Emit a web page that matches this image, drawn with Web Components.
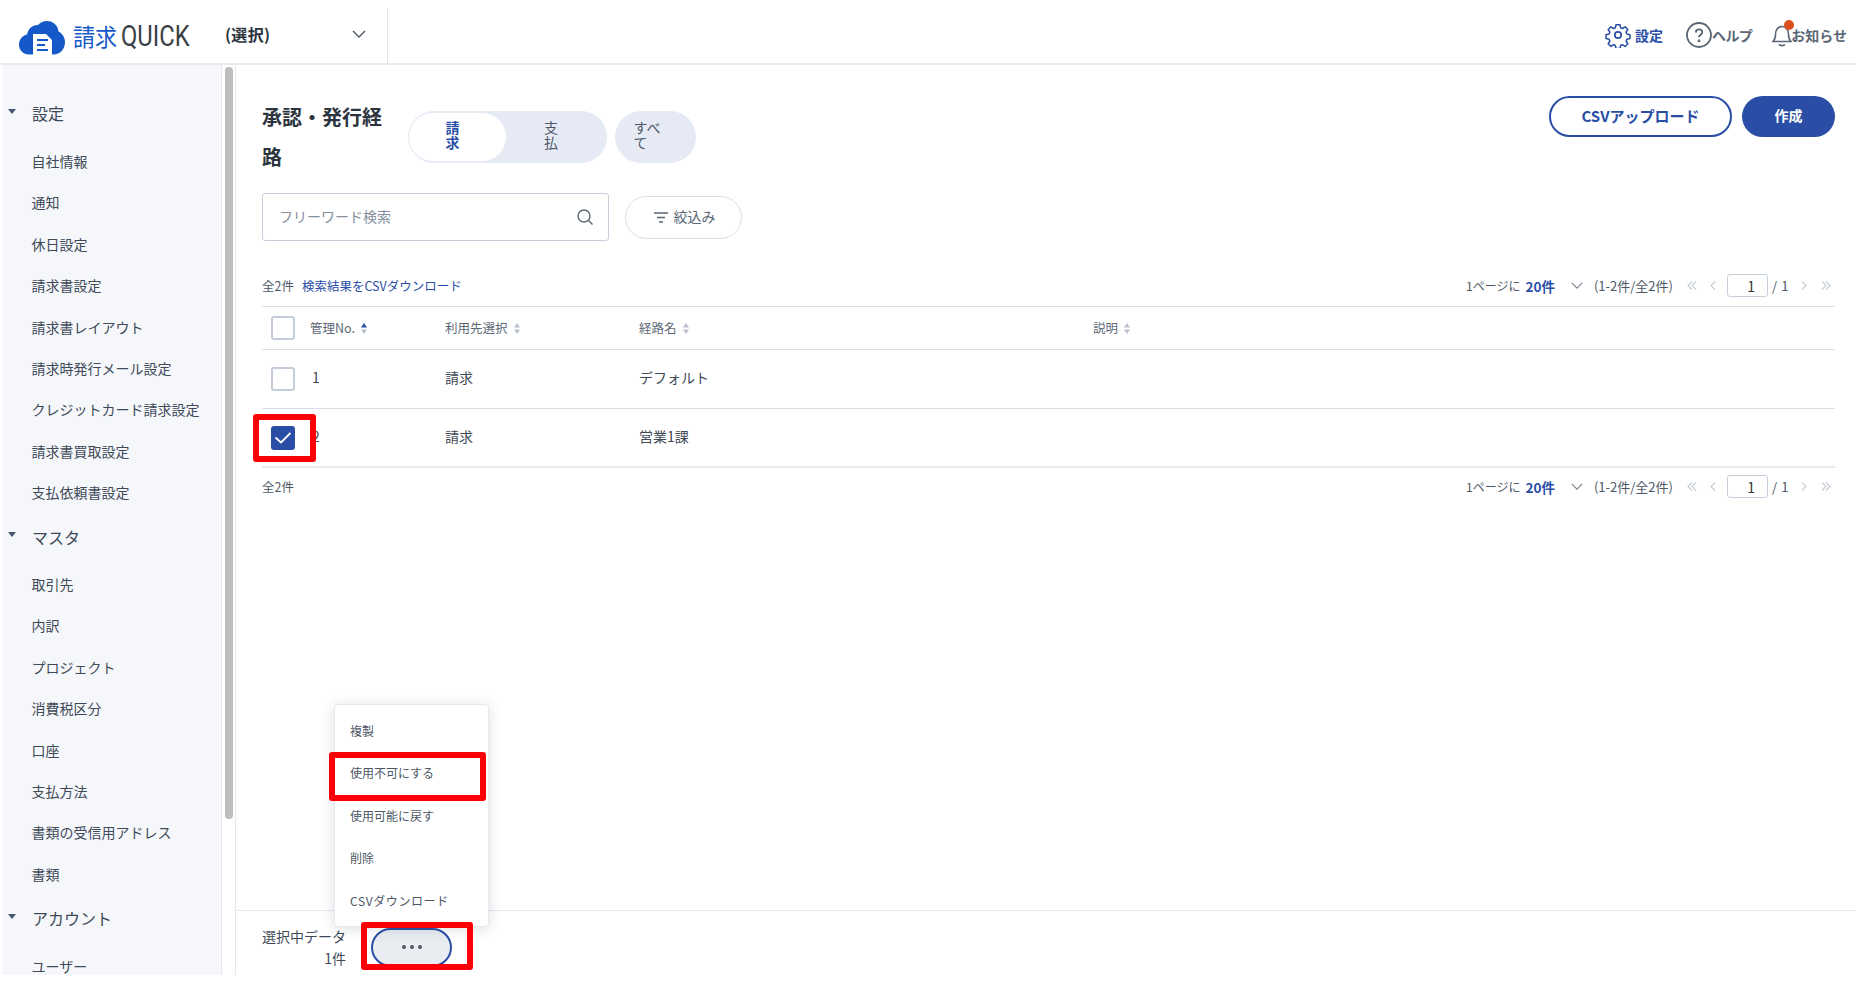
<!DOCTYPE html>
<html lang="ja">
<head>
<meta charset="utf-8">
<title>承認・発行経路</title>
<style>
  html, body { margin: 0; padding: 0; background: #fff; overflow: hidden; }
  body { font-family: "Noto Sans CJK JP", "Noto Sans", sans-serif; color: #3f4a58; }
</style>
</head>
<body>
<app-shell>
  <app-header slot="header"></app-header>
  <side-nav slot="nav">
    <nav-section>設定</nav-section>
    <nav-item>自社情報</nav-item>
    <nav-item>通知</nav-item>
    <nav-item>休日設定</nav-item>
    <nav-item>請求書設定</nav-item>
    <nav-item>請求書レイアウト</nav-item>
    <nav-item>請求時発行メール設定</nav-item>
    <nav-item>クレジットカード請求設定</nav-item>
    <nav-item>請求書買取設定</nav-item>
    <nav-item>支払依頼書設定</nav-item>
    <nav-section>マスタ</nav-section>
    <nav-item>取引先</nav-item>
    <nav-item>内訳</nav-item>
    <nav-item>プロジェクト</nav-item>
    <nav-item>消費税区分</nav-item>
    <nav-item>口座</nav-item>
    <nav-item>支払方法</nav-item>
    <nav-item>書類の受信用アドレス</nav-item>
    <nav-item>書類</nav-item>
    <nav-section>アカウント</nav-section>
    <nav-item>ユーザー</nav-item>
  </side-nav>
  <route-page slot="main"></route-page>
  <red-mark style="left:253px;top:414px;width:63px;height:48px"></red-mark>
  <red-mark style="left:329px;top:752px;width:157px;height:49px"></red-mark>
  <red-mark style="left:361px;top:922px;width:112px;height:48px"></red-mark>
</app-shell>

<script>
const ICONS = {
  chevron: '<svg width="14" height="8" viewBox="0 0 14 8" fill="none" stroke="currentColor" stroke-width="1.4"><path d="M1 1l6 6 6-6"/></svg>',
  sort: (active) => `<svg width="6" height="13" viewBox="0 0 6 13"><path d="M3 1L6 5.500H0z" fill="${active ? '#2a4ea6' : '#b9c1cd'}"/><path d="M3 12L0 7.500h6z" fill="#b9c1cd"/></svg>`,
  first: '<svg width="10" height="9" viewBox="0 0 10 9" fill="none" stroke="#c6ccd6" stroke-width="1.1"><path d="M5 .5L1 4.500l4 4M9 .5L5 4.500l4 4"/></svg>',
  prev: '<svg width="6" height="9" viewBox="0 0 6 9" fill="none" stroke="#c6ccd6" stroke-width="1.1"><path d="M5 .5L1 4.500l4 4"/></svg>',
  next: '<svg width="6" height="9" viewBox="0 0 6 9" fill="none" stroke="#c6ccd6" stroke-width="1.1"><path d="M1 .5l4 4-4 4"/></svg>',
  last: '<svg width="10" height="9" viewBox="0 0 10 9" fill="none" stroke="#c6ccd6" stroke-width="1.1"><path d="M1 .5l4 4-4 4M5 .5l4 4-4 4"/></svg>'
};

class AppShell extends HTMLElement {
  constructor() {
    super();
    this.attachShadow({ mode: 'open' });
    this.shadowRoot.innerHTML = `
      <style>
        :host { display: grid; position: relative; width: 1855px; height: 975px; grid-template-rows: 65px 910px; grid-template-columns: 236px 1fr; overflow: hidden; }
        .top { grid-column: 1 / 3; }
      </style>
      <div class="top"><slot name="header"></slot></div>
      <slot name="nav"></slot>
      <slot name="main"></slot>
      <slot></slot>
    `;
  }
}

class AppHeader extends HTMLElement {
  constructor() {
    super();
    this.attachShadow({ mode: 'open' });
    this.shadowRoot.innerHTML = `
      <style>
        :host { display: flex; height: 63px; border-bottom: 2px solid #e8eaf0; align-items: stretch; justify-content: space-between; background: #fff; }
        .left { display: flex; align-items: center; height: 54px; margin-top: 9px; border-right: 1px solid #e3e5ea; width: 388px; box-sizing: border-box; padding-left: 19px; }
        .logo { display: block; margin-top: 3px; }
        .brand { display: flex; align-items: center; margin-left: 8px; width: 142px; height: 34px; margin-top: -1px; white-space: nowrap; }
        .brand span { display: inline-block; font-size: 24px; color: #1558c8; width: 48px; transform: scaleX(.92); transform-origin: left center; }
        .brand b { display: inline-block; font: 400 29px Roboto, sans-serif; color: #3b3f46; transform: scaleX(.82); transform-origin: left center; }
        .pick { font-size: 16px; font-weight: 700; color: #2c3440; margin-left: 10px; width: 127px; margin-top: -5px; letter-spacing: .3px; }
        .chev { color: #4d5866; display: flex; margin-top: -4px; }
        .right { display: flex; align-items: center; padding-top: 6px; font-size: 14px; font-weight: 700; color: #5a6675; margin-right: 8px; }
        .act { display: flex; align-items: center; position: relative; white-space: nowrap; }
        .gear { color: #2a4ea6; margin-right: 23px; }
        .gear svg { margin-right: 4px; }
        .help { margin-right: 20px; letter-spacing: -.6px; }
        .bell svg { margin-right: -1px; }
        .bell i { position: absolute; left: 12px; top: -2px; width: 10px; height: 10px; border-radius: 50%; background: #d9501e; }
      </style>
      <div class="left">
        <svg class="logo" width="46" height="34" viewBox="0 0 46 34">
          <path fill="#1558c8" d="M10 33.500C4 33.500 0 29 0 23.500c0-5 3.500-9 8-10C9.500 7 14 3.500 19 4c2.500-2.500 5.500-4 9-4 6 0 11 4.500 11.500 10.500 3.800 2 6.500 6 6.500 10.500 0 7-5 12.500-11.500 12.500z"/>
          <path fill="#fff" d="M14 13h13l6 6v15H14z"/>
          <path stroke="#1558c8" stroke-width="2" d="M18 19h11M18 24h8M18 29h11"/>
        </svg>
        <div class="brand"><span>請求</span><b>QUICK</b></div>
        <div class="pick">(選択)</div>
        <div class="chev">${ICONS.chevron}</div>
      </div>
      <div class="right">
        <div class="act gear">
          <svg width="26" height="26" viewBox="0 0 26 26" fill="none" stroke="currentColor" stroke-width="1.700" stroke-linejoin="round"><path d="M10.800 1.500h4.400l.7 3.400 2 .9 3-1.900 3 3-1.900 3 .9 2 3.400.7v4.400l-3.400.7-.9 2 1.900 3-3 3-3-1.900-2 .9-.7 3.400h-4.400l-.7-3.400-2-.9-3 1.900-3-3 1.900-3-.9-2-3.400-.7v-4.400l3.400-.7.9-2-1.900-3 3-3 3 1.900 2-.9z" transform="translate(1.300 1.300) scale(.9)"/><circle cx="13" cy="13" r="3.200"/></svg>
          設定
        </div>
        <div class="act help">
          <svg width="26" height="26" viewBox="0 0 26 26" fill="none" stroke="currentColor" stroke-width="1.800"><circle cx="13" cy="13" r="12"/><path d="M9.800 10.500c0-2 1.500-3.200 3.300-3.200s3.200 1.200 3.200 3c0 2.500-3.300 2.500-3.300 5"/><circle cx="13" cy="18.800" r=".6"/></svg>
          ヘルプ
        </div>
        <div class="act bell">
          <svg width="20" height="26" viewBox="0 0 20 26" fill="none" stroke="currentColor" stroke-width="1.600"><path d="M1 19.500c2-2 2.500-3.500 2.500-7 0-4.500 2.500-8 6.500-8s6.500 3.500 6.500 8c0 3.500.5 5 2.500 7z"/><path d="M7 22.500c1 1.500 5 1.500 6 0"/></svg>
          <i></i>
          お知らせ
        </div>
      </div>
    `;
  }
}

class SideNav extends HTMLElement {
  constructor() {
    super();
    this.attachShadow({ mode: 'open' });
    this.shadowRoot.innerHTML = `
      <style>
        :host { display: flex; height: 910px; margin-left: 2px; overflow: hidden; }
        .list { width: 220px; flex: none; background: #f5f7fb; padding-top: 25.700px; box-sizing: border-box; border-right: 1px solid #e6e8ee; }
        .track { width: 8px; flex: none; background: #fff; border-right: 1px solid #e6e8ee; padding: 2px 2px 0 3px; }
        .thumb { height: 752px; background: #bdbdbd; border-radius: 4px; }
      </style>
      <div class="list"><slot></slot></div>
      <div class="track"><div class="thumb"></div></div>
    `;
  }
}

class NavSection extends HTMLElement {
  constructor() {
    super();
    this.attachShadow({ mode: 'open' });
    this.shadowRoot.innerHTML = `
      <style>
        :host { display: flex; align-items: center; height: 46.600px; margin-bottom: 4px; font-size: 16px; color: #3f4a58; }
        i { width: 0; height: 0; margin: -5px 0 0 6px; border: 4px solid transparent; border-top: 5px solid #46566e; border-bottom: 0; }
        span { margin-left: 16px; padding-bottom: 1px; }
      </style>
      <i></i><span><slot></slot></span>
    `;
  }
}

class NavItem extends HTMLElement {
  constructor() {
    super();
    this.attachShadow({ mode: 'open' });
    this.shadowRoot.innerHTML = `
      <style>
        :host { display: flex; align-items: center; height: 39.400px; padding: 0 0 2px 29.500px; font-size: 14px; color: #3f4a58; white-space: nowrap; }
      </style>
      <slot></slot>
    `;
  }
}

class CheckBox extends HTMLElement {
  constructor() {
    super();
    this.attachShadow({ mode: 'open' });
    const on = this.hasAttribute('checked');
    this.shadowRoot.innerHTML = `
      <style>
        :host { display: block; width: 24px; height: 24px; box-sizing: border-box; border-radius: 3px; border: 2px solid ${on ? '#2a4ea6' : '#c3cddb'}; background: ${on ? '#2a4ea6' : '#fff'}; }
        svg { display: block; }
      </style>
      ${on ? '<svg width="20" height="20" viewBox="0 0 20 20" fill="none" stroke="#fff" stroke-width="1.800"><path d="M2.500 9.500l5.500 5 9.500-9.500"/></svg>' : ''}
    `;
  }
}

class PagerBar extends HTMLElement {
  constructor() {
    super();
    this.attachShadow({ mode: 'open' });
    this.shadowRoot.innerHTML = `
      <style>
        :host { display: flex; align-items: center; justify-content: space-between; height: 27px; padding-bottom: 7px; font-size: 12.500px; color: #4d5866; }
        .pg { display: flex; align-items: center; white-space: nowrap; margin-right: 4px; }
        .per { font-size: 12px; }
        .num { color: #2a4ea6; font-weight: 700; font-size: 13.500px; margin-left: 5px; }
        .chev { color: #7a8594; display: flex; margin: 0 11px 0 16px; }
        .chev svg { width: 12px; height: 7px; }
        .arr { display: flex; }
        input { width: 41px; height: 23px; box-sizing: border-box; border: 1px solid #c6d0dd; border-radius: 3px; text-align: right; padding: 0 12px 0 0; font: 14px "Noto Sans CJK JP", sans-serif; color: #333; margin: 0 4px 0 0; background: #fff; }
        .range { font-size: 13px; margin-right: 14px; }
        .total { margin-right: 12px; font-size: 13px; letter-spacing: .6px; }
        .left { white-space: nowrap; }
        .left ::slotted(a) { color: #2a4ea6; margin-left: 8px; }
      </style>
      <div class="left"><slot></slot></div>
      <div class="pg">
        <span class="per">1ページに</span><span class="num">20件</span>
        <span class="chev">${ICONS.chevron}</span>
        <span class="range">(1-2件/全2件)</span>
        <span class="arr">${ICONS.first}</span><span class="arr" style="margin:0 11px 0 13px">${ICONS.prev}</span>
        <input value="1" aria-label="page">
        <span class="total">/ 1</span>
        <span class="arr">${ICONS.next}</span><span class="arr" style="margin-left:14px">${ICONS.last}</span>
      </div>
    `;
  }
}

class RouteTable extends HTMLElement {
  constructor() {
    super();
    this.attachShadow({ mode: 'open' });
    this.shadowRoot.innerHTML = `
      <style>
        :host { display: block; border-top: 1px solid #d8dee8; }
        .row { display: grid; grid-template-columns: 48px 135px 194px 454px 1fr; align-items: center; border-bottom: 1px solid #d8dee8; font-size: 14px; height: 58px; color: #3f4a58; }
        .row > div { padding-bottom: 4px; }
        .head { height: 42px; font-size: 12.500px; color: #5d6876; }
        .row.head > div { padding-bottom: 1px; }
        .row.last { border-bottom: 2px solid #e6e9ef; height: 57px; }
        .row.last > div { padding-bottom: 3px; }
        check-box { margin-left: 9px; }
        .sort { display: flex; align-items: center; gap: 6px; }
        .sort svg { margin-top: 2px; }
        .no { padding-left: 2px; }
      </style>
      <div class="row head">
        <check-box></check-box>
        <div class="sort">管理No. ${ICONS.sort(true)}</div>
        <div class="sort">利用先選択 ${ICONS.sort(false)}</div>
        <div class="sort">経路名 ${ICONS.sort(false)}</div>
        <div class="sort">説明 ${ICONS.sort(false)}</div>
      </div>
      <div class="row">
        <check-box></check-box><div class="no">1</div><div>請求</div><div>デフォルト</div><div></div>
      </div>
      <div class="row last">
        <check-box checked></check-box><div class="no">2</div><div>請求</div><div>営業1課</div><div></div>
      </div>
    `;
  }
}

class ActionBar extends HTMLElement {
  constructor() {
    super();
    this.attachShadow({ mode: 'open' });
    this.shadowRoot.innerHTML = `
      <style>
        :host { display: flex; position: relative; height: 64px; border-top: 1px solid #e3e6ee; padding-left: 26px; font-size: 14px; color: #3f4a58; background: #fff; }
        .count { width: 84px; text-align: right; padding-top: 14px; line-height: 22px; white-space: nowrap; }
        .more { display: flex; align-items: center; justify-content: center; gap: 4px; width: 81px; height: 39px; box-sizing: border-box; margin: 17px 0 0 25px; padding-bottom: 2px; border: 2px solid #2a4ea6; border-radius: 20px; background: #e9edf2; }
        .more i { width: 4px; height: 4px; border-radius: 50%; background: #4d5866; }
        .menu { position: absolute; left: 98px; bottom: 48px; width: 155px; height: 223px; box-sizing: border-box; padding: 5px 0 7px; background: #fff; border: 1px solid #e6e9f0; border-radius: 4px; box-shadow: 0 2px 14px rgba(40,50,70,.16); font-size: 12px; }
        .menu div { height: 42.400px; line-height: 42.400px; padding-left: 15px; white-space: nowrap; color: #4d5866; }
        .menu .csv { letter-spacing: .6px; }
      </style>
      <div class="count">選択中データ<br>1件</div>
      <div class="more"><i></i><i></i><i></i></div>
      <div class="menu">
        <div>複製</div>
        <div>使用不可にする</div>
        <div>使用可能に戻す</div>
        <div>削除</div>
        <div class="csv">CSVダウンロード</div>
      </div>
    `;
  }
}

class RoutePage extends HTMLElement {
  constructor() {
    super();
    this.attachShadow({ mode: 'open' });
    this.shadowRoot.innerHTML = `
      <style>
        :host { display: flex; flex-direction: column; height: 910px; background: #fff; }
        .body { flex: 1; padding: 32px 20px 0 26px; min-height: 0; }
        .top { display: flex; align-items: center; height: 80px; }
        h1 { margin: 0; width: 130px; font-size: 20px; line-height: 40px; font-weight: 700; color: #2c3440; }
        .toggle { display: flex; margin-left: 16px; width: 199px; height: 52px; box-sizing: border-box; padding: 2px 1px; background: #e6eaf5; border-radius: 26px; font-size: 14px; line-height: 15px; }
        .tab { display: flex; align-items: center; justify-content: center; width: 97px; border-radius: 24px; text-align: center; color: #4d5866; }
        .tab span { width: 14px; margin-right: 10px; padding-bottom: 4px; }
        .tab.on { background: #fff; color: #2a4ea6; font-weight: 700; }
        .tab.off { flex: 1; }
        .all { display: flex; align-items: center; justify-content: center; margin-left: 8px; width: 81px; height: 52px; background: #e6eaf5; border-radius: 26px; font-size: 14px; line-height: 15px; color: #4d5866; }
        .all span { width: 28px; margin-right: 16px; padding-bottom: 4px; }
        .btns { margin-left: auto; align-self: flex-start; display: flex; gap: 10px; margin-top: -1px; }
        .btn { height: 41px; box-sizing: border-box; border-radius: 21px; font-size: 15px; font-weight: 700; display: flex; align-items: center; justify-content: center; padding-bottom: 3px; }
        .csv { width: 183px; border: 2px solid #2a4ea6; color: #2a4ea6; background: #fff; }
        .make { width: 93px; background: #2a4ea6; color: #fff; font-size: 14px; }
        .filters { display: flex; align-items: center; margin-top: 16px; height: 48px; }
        .search { display: flex; align-items: center; justify-content: space-between; width: 347px; height: 48px; box-sizing: border-box; border: 1px solid #c6d0dd; border-radius: 3px; padding: 0 14px 0 16px; font-size: 14px; color: #858f9d; }
        .search span { padding-bottom: 2px; }
        .search svg { color: #5d6876; }
        .filter { display: flex; align-items: center; justify-content: center; gap: 6px; width: 117px; height: 43px; box-sizing: border-box; margin-left: 16px; padding: 0 0 2px 2px; border: 1px solid #d9deea; border-radius: 22px; font-size: 14px; color: #5a6675; }
        .filter svg { margin-top: 2px; }
        pager-bar.upper { margin-top: 31px; }
        pager-bar.lower { margin-top: 5px; }
      </style>
      <div class="body">
        <div class="top">
          <h1>承認・発行経路</h1>
          <div class="toggle">
            <div class="tab on"><span>請求</span></div>
            <div class="tab off"><span>支払</span></div>
          </div>
          <div class="all"><span>すべて</span></div>
          <div class="btns">
            <div class="btn csv">CSVアップロード</div>
            <div class="btn make">作成</div>
          </div>
        </div>
        <div class="filters">
          <div class="search">
            <span>フリーワード検索</span>
            <svg width="18" height="18" viewBox="0 0 18 18" fill="none" stroke="currentColor" stroke-width="1.400"><circle cx="8" cy="8" r="6"/><path d="M12.500 12.500l4 4"/></svg>
          </div>
          <div class="filter">
            <svg width="14" height="11" viewBox="0 0 14 11" fill="none" stroke="currentColor" stroke-width="1.400"><path d="M0 1h14M3 5.500h8M5 10h4"/></svg>
            絞込み
          </div>
        </div>
        <pager-bar class="upper">全2件<a>検索結果をCSVダウンロード</a></pager-bar>
        <route-table></route-table>
        <pager-bar class="lower">全2件</pager-bar>
      </div>
      <action-bar></action-bar>
    `;
  }
}

class RedMark extends HTMLElement {
  constructor() {
    super();
    this.attachShadow({ mode: 'open' });
    this.shadowRoot.innerHTML = `
      <style>
        :host { display: block; position: absolute; box-sizing: border-box; border: 6px solid #fb0007; border-radius: 3px; }
      </style>
    `;
  }
}

customElements.define('check-box', CheckBox);
customElements.define('pager-bar', PagerBar);
customElements.define('route-table', RouteTable);
customElements.define('action-bar', ActionBar);
customElements.define('route-page', RoutePage);
customElements.define('red-mark', RedMark);
customElements.define('nav-section', NavSection);
customElements.define('nav-item', NavItem);
customElements.define('side-nav', SideNav);
customElements.define('app-header', AppHeader);
customElements.define('app-shell', AppShell);
</script>
</body>
</html>
